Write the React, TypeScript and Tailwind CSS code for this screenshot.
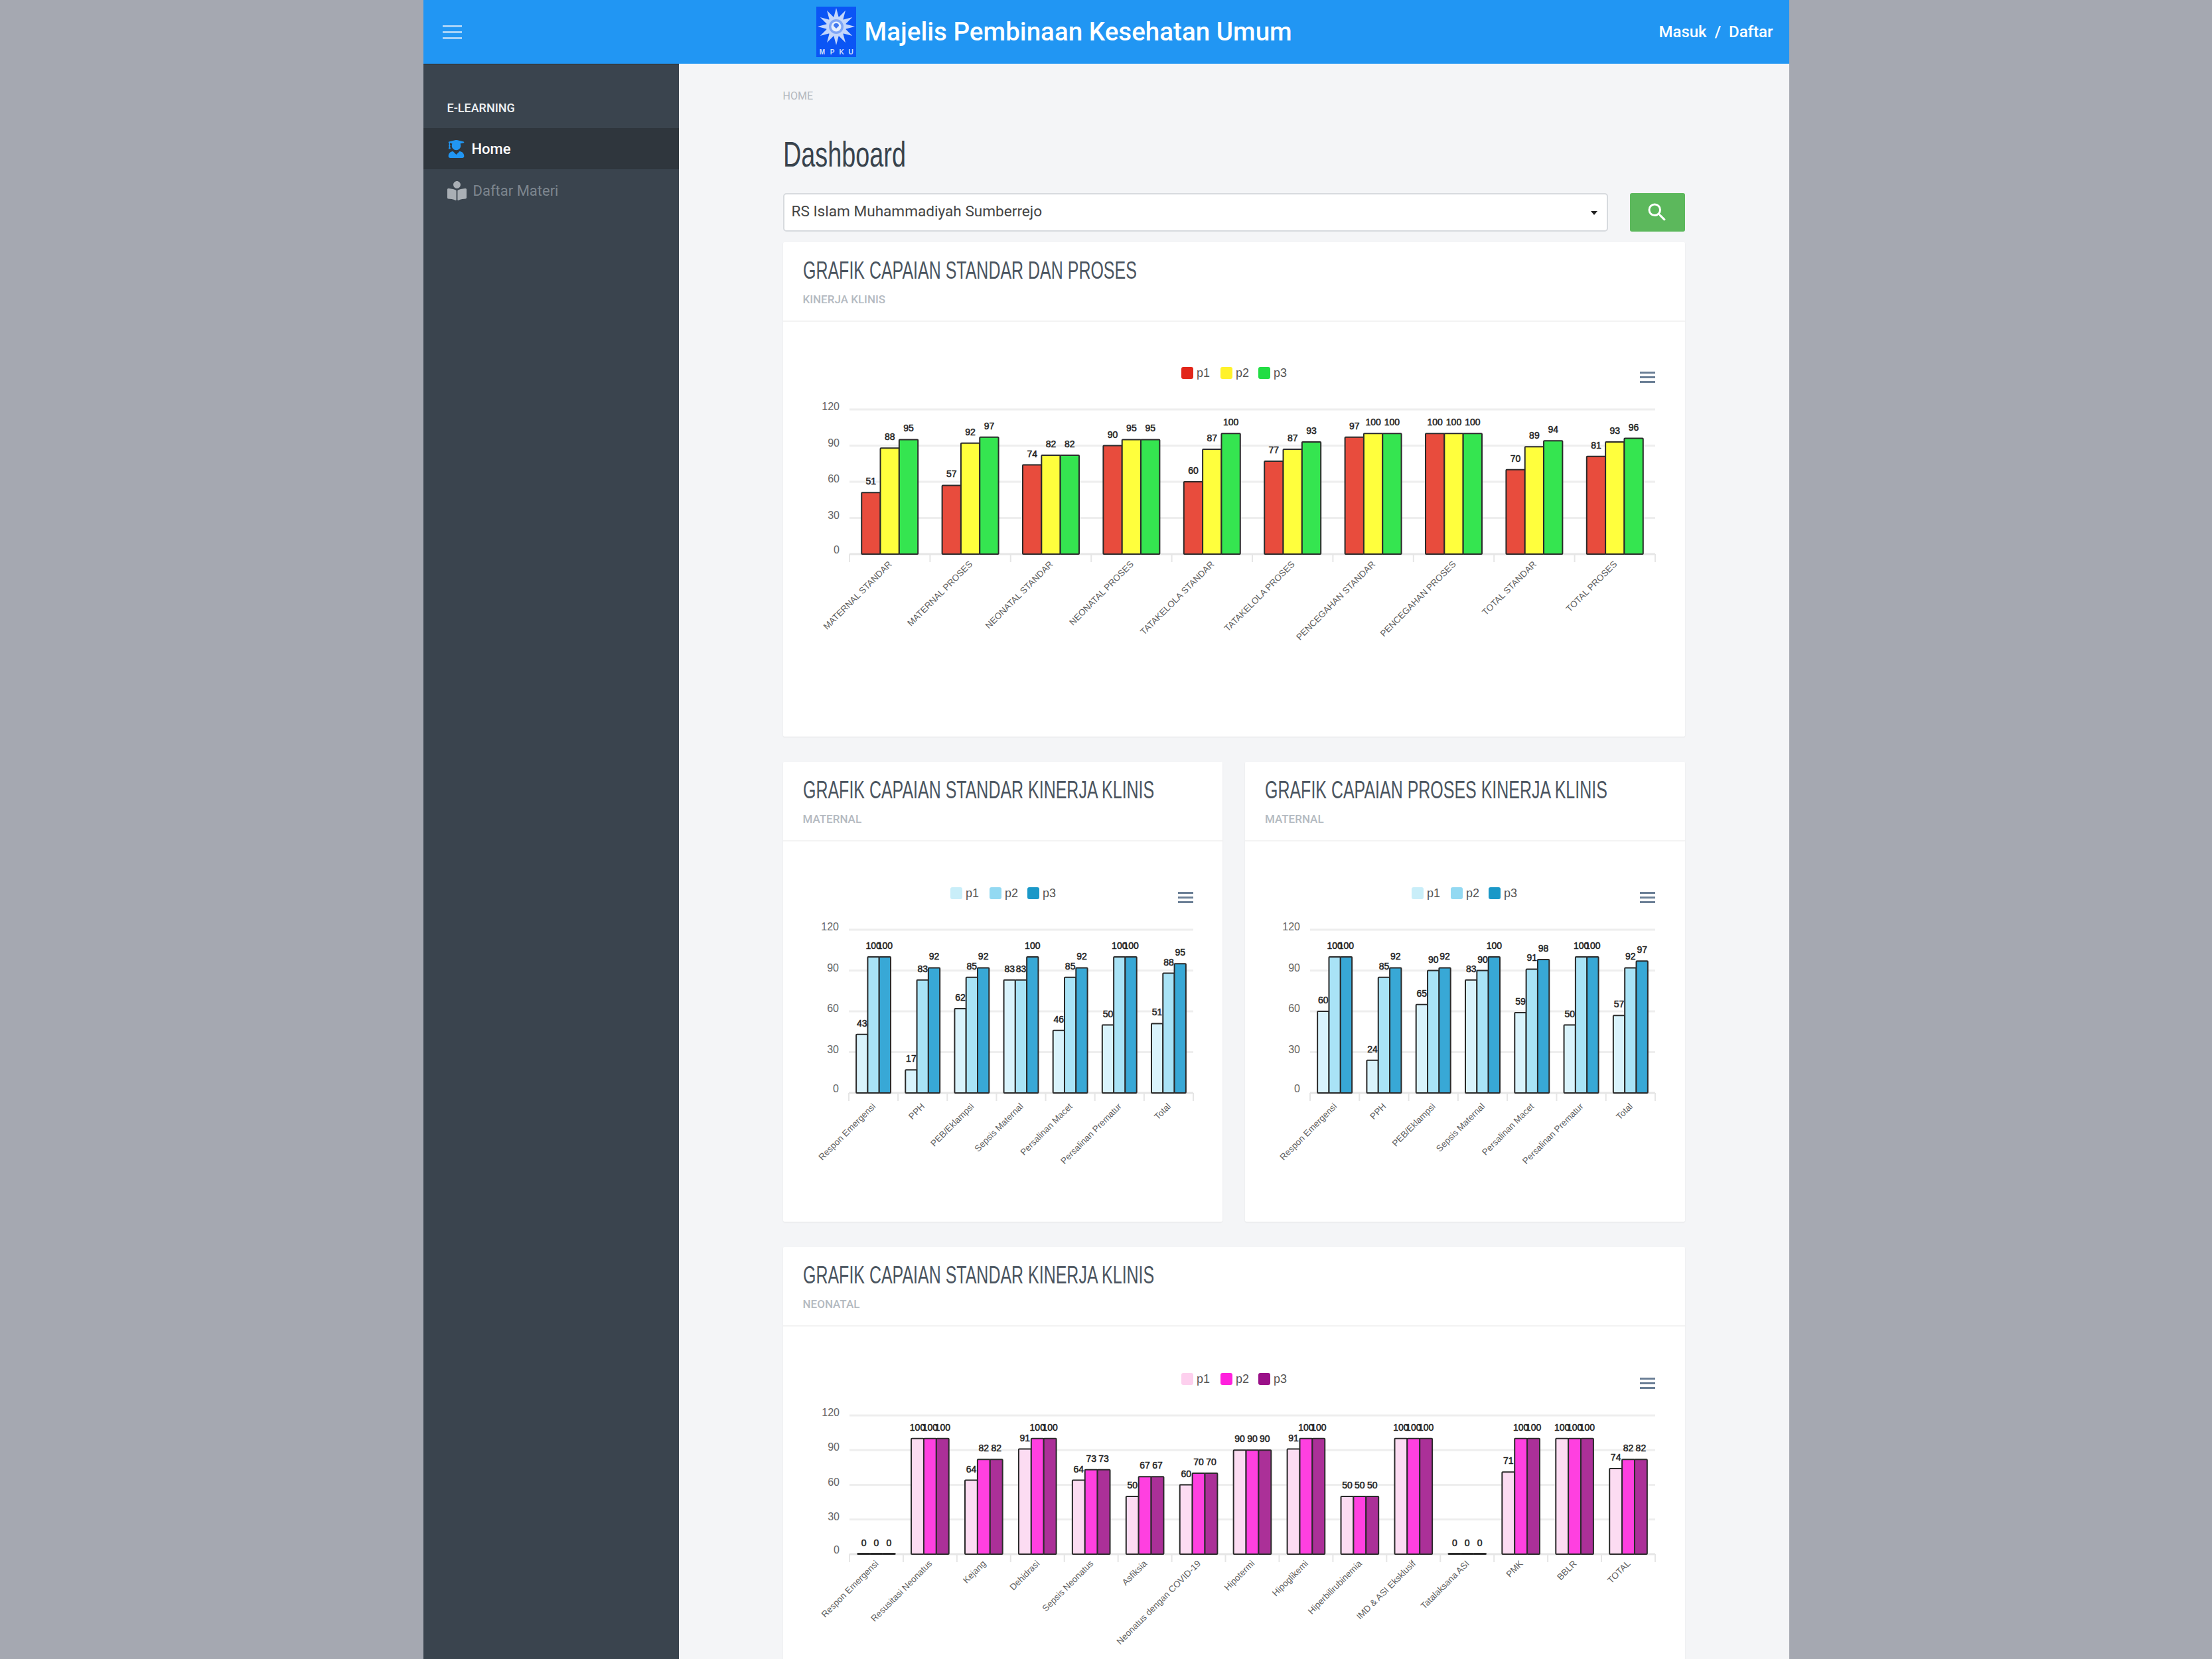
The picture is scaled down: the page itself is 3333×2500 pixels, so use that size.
import React from "react";
import { FaUserGraduate, FaBookReader } from "react-icons/fa";
import { MdSearch } from "react-icons/md";

type Row = [string, number, number, number];
type ChartProps = {
  width: number; height: number; left: number; right: number; top: number; bottom: number;
  legendX: number; rows: Row[]; fills: string[]; swatches: string[]; labelSize: number; labelDy: number;
};

const FONT = "'Liberation Sans', Arial, sans-serif";

function Chart({ width, height, left, right, top, bottom, legendX, rows, fills, swatches, labelSize, labelDy }: ChartProps) {
  const cell = (right - left) / rows.length;
  const unit = (bottom - top) / 120;
  const bar = cell * 0.2333;
  const pad = cell * 0.15;
  const legendY = top - 64;
  const offsets = [0, 59, 116];
  return (
    <svg width={width} height={height} viewBox={`0 0 ${width} ${height}`} className="block" fontFamily={FONT}>
      {offsets.map((o, i) => (
        <g key={i}>
          <rect x={legendX + o} y={legendY} width={18} height={18} rx={3} fill={swatches[i]} />
          <text x={legendX + o + 23} y={legendY + 15} fontSize={18} fill="#555">{`p${i + 1}`}</text>
        </g>
      ))}
      <g stroke="#6b7f96" strokeWidth={3}>
        <path d={`M${right - 23} ${top - 55.5}H${right}M${right - 23} ${top - 48.5}H${right}M${right - 23} ${top - 41.5}H${right}`} />
      </g>
      {[120, 90, 60, 30].map((v) => (
        <line key={v} x1={left} x2={right} y1={bottom - v * unit} y2={bottom - v * unit} stroke="#eeeeee" strokeWidth={3} />
      ))}
      {[120, 90, 60, 30, 0].map((v) => (
        <text key={v} x={left - 15} y={bottom - v * unit + (v === 0 ? -1 : 1)} textAnchor="end" fontSize={16} fill="#666">{v}</text>
      ))}
      <line x1={left} x2={right} y1={bottom} y2={bottom} stroke="#e6e6e6" strokeWidth={3} />
      {Array.from({ length: rows.length + 1 }).map((_, i) => (
        <line key={i} x1={left + i * cell} x2={left + i * cell} y1={bottom} y2={bottom + 12} stroke="#e6e6e6" strokeWidth={2} />
      ))}
      {rows.map((r, i) => {
        const x0 = left + i * cell + pad;
        const cx = left + i * cell + cell / 2;
        const lx = cx + 4;
        const ly = bottom + labelDy;
        return (
          <g key={r[0]}>
            {[r[1], r[2], r[3]].map((v, j) => (
              <g key={j}>
                <rect x={x0 + j * bar} y={bottom - Math.max(v * unit, 1)} width={bar} height={Math.max(v * unit, 1)} fill={fills[j]} stroke="#2a2a2a" strokeWidth={2} rx={1} />
                <text x={x0 + j * bar + bar / 2} y={bottom - v * unit - 12} textAnchor="middle" fontSize={14} stroke="#222" strokeWidth={0.5} fill="#222">{v}</text>
              </g>
            ))}
            <text x={lx} y={ly} textAnchor="end" fontSize={labelSize} fill="#5f5f5f" transform={`rotate(-45 ${lx} ${ly})`}>{r[0]}</text>
          </g>
        );
      })}
    </svg>
  );
}

function Card({ title, sub, children }: { title: string; sub: string; children: React.ReactNode }) {
  return (
    <div className="bg-white shadow-[0_1px_2px_rgba(0,0,0,0.08)] rounded-[2px] overflow-hidden">
      <div className="h-[120px] border-b-2 border-[#f3f3f3] pl-[30px] pt-[22px]">
        <div className="h-[42px] leading-[42px] text-[37px] text-[#4b5560] whitespace-nowrap font-['Liberation_Sans_Narrow','Liberation_Sans',sans-serif] origin-left scale-x-[0.675]">{title}</div>
        <div className="mt-[13px] text-[17px] leading-[18px] font-medium text-[#b4bac1] font-[Roboto,sans-serif]">{sub}</div>
      </div>
      {children}
    </div>
  );
}

const R1: Row[] = [
  ["MATERNAL STANDAR", 51, 88, 95], ["MATERNAL PROSES", 57, 92, 97], ["NEONATAL STANDAR", 74, 82, 82],
  ["NEONATAL PROSES", 90, 95, 95], ["TATAKELOLA STANDAR", 60, 87, 100], ["TATAKELOLA PROSES", 77, 87, 93],
  ["PENCEGAHAN STANDAR", 97, 100, 100], ["PENCEGAHAN PROSES", 100, 100, 100], ["TOTAL STANDAR", 70, 89, 94], ["TOTAL PROSES", 81, 93, 96],
];
const R2: Row[] = [
  ["Respon Emergensi", 43, 100, 100], ["PPH", 17, 83, 92], ["PEB/Eklampsi", 62, 85, 92], ["Sepsis Maternal", 83, 83, 100],
  ["Persalinan Macet", 46, 85, 92], ["Persalinan Prematur", 50, 100, 100], ["Total", 51, 88, 95],
];
const R3: Row[] = [
  ["Respon Emergensi", 60, 100, 100], ["PPH", 24, 85, 92], ["PEB/Eklampsi", 65, 90, 92], ["Sepsis Maternal", 83, 90, 100],
  ["Persalinan Macet", 59, 91, 98], ["Persalinan Prematur", 50, 100, 100], ["Total", 57, 92, 97],
];
const R4: Row[] = [
  ["Respon Emergensi", 0, 0, 0], ["Resusitasi Neonatus", 100, 100, 100], ["Kejang", 64, 82, 82], ["Dehidrasi", 91, 100, 100],
  ["Sepsis Neonatus", 64, 73, 73], ["Asfiksia", 50, 67, 67], ["Neonatus dengan COVID-19", 60, 70, 70], ["Hipotermi", 90, 90, 90],
  ["Hipoglikemi", 91, 100, 100], ["Hiperbilirubinemia", 50, 50, 50], ["IMD & ASI Eksklusif", 100, 100, 100], ["Tatalaksana ASI", 0, 0, 0],
  ["PMK", 71, 100, 100], ["BBLR", 100, 100, 100], ["TOTAL", 74, 82, 82],
];
const RED = ["#e84c3d", "#ffff3d", "#35e550"];
const RED_S = ["#e2261a", "#fff22a", "#22dd44"];
const BLUE = ["#d9f3fc", "#a9e3f6", "#38a8d6"];
const BLUE_S = ["#c9eef9", "#93d9f2", "#1a98c8"];
const PINK = ["#fcdcf2", "#ff40e0", "#ab3098"];
const PINK_S = ["#fdd0ee", "#ff20dd", "#9a1088"];

function Logo() {
  const rays = Array.from({ length: 12 }).map((_, i) => i * 30);
  return (
    <svg width={60} height={76} viewBox="0 0 60 76" className="shrink-0" fontFamily="'Liberation Sans', sans-serif">
      <rect width={60} height={76} fill="#0b55f5" />
      <g transform="translate(30 30)">
        {rays.map((a) => (
          <polygon key={a} points="-4,-13 0,-28 4,-13" fill="#c3d6fb" transform={`rotate(${a})`} />
        ))}
        <circle r={15} fill="#c3d6fb" />
        <circle r={11} fill="#7fa6f6" />
        <circle r={7.5} fill="#e6effd" />
        <path d="M-4 -1a4 4 0 0 1 8 0l-4 4z" fill="#3f76ee" />
      </g>
      <g fill="#cfe0fb" fontSize={10} fontWeight={700} textAnchor="middle">
        <text x={9} y={72}>M</text>
        <text x={24} y={72}>P</text>
        <text x={38} y={72}>K</text>
        <text x={52} y={72}>U</text>
      </g>
    </svg>
  );
}

export default function App() {
  return (
    <div className="h-[2500px] w-[3333px] overflow-hidden bg-[#a5a8b1] font-[Roboto,sans-serif]">
      <div className="mx-auto flex h-[2500px] w-[2058px] flex-col">
        <header className="flex h-[96px] shrink-0 items-center bg-[#2196f3] text-white">
          <div className="flex w-[592px] shrink-0 pl-[29px]">
            <div className="flex w-[29px] flex-col gap-[6px]">
              <span className="h-[3px] bg-[#a9d4f8]" />
              <span className="h-[3px] bg-[#a9d4f8]" />
              <span className="h-[3px] bg-[#a9d4f8]" />
            </div>
          </div>
          <Logo />
          <div className="ml-[13px] text-[38.6px] font-medium leading-none whitespace-nowrap">Majelis Pembinaan Kesehatan Umum</div>
          <div className="ml-auto flex gap-[12px] pr-[24px] text-[24px] font-medium">
            <span>Masuk</span><span>/</span><span>Daftar</span>
          </div>
        </header>
        <div className="flex min-h-0 flex-1">
          <aside className="w-[385px] shrink-0 border-t-2 border-[#363c42] bg-[#3a444e] text-white">
            <div className="flex h-[95px] items-end pb-[21px] pl-[36px] text-[18px] font-medium leading-[18px] text-[#eef0f2]">E-LEARNING</div>
            <div className="flex h-[62px] items-center gap-[10px] bg-[#2f363d] pl-[36px] text-[22px] font-medium">
              <FaUserGraduate className="text-[27px] text-[#2196f3]" />
              <span>Home</span>
            </div>
            <div className="flex h-[64px] items-center gap-[10px] pl-[36px] text-[22px] text-[#7d868e]">
              <FaBookReader className="text-[29px] text-[#a9afb5]" />
              <span>Daftar Materi</span>
            </div>
          </aside>
          <main className="min-w-0 flex-1 overflow-hidden bg-[#f4f5f7] px-[157px]">
            <div className="mt-[40px] text-[16px] leading-[18px] text-[#b3b8be]">HOME</div>
            <h1 className="mt-[49px] h-[58px] text-[54px] leading-[58px] text-[#39434d] whitespace-nowrap font-['Liberation_Sans_Narrow','Liberation_Sans',sans-serif] origin-left scale-x-[0.7]">Dashboard</h1>
            <div className="mt-[30px] flex h-[58px] gap-[33px]">
              <div className="flex flex-1 items-center justify-between rounded-[5px] border-2 border-[#d7dade] bg-white pb-[3px] pl-[11px] pr-[14px] text-[22.6px] text-[#444]">
                <span>RS Islam Muhammadiyah Sumberrejo</span>
                <span className="mt-[5px] border-x-[5px] border-t-[6px] border-x-transparent border-t-[#222]" />
              </div>
              <button className="flex w-[83px] items-center justify-center rounded-[3px] bg-[#5cb85c] text-[36px] text-white"><MdSearch /></button>
            </div>
            <div className="mt-[16px] flex flex-col gap-[38px]">
              <Card title="GRAFIK CAPAIAN STANDAR DAN PROSES" sub="KINERJA KLINIS">
                <Chart width={1360} height={625} left={100} right={1314} top={132} bottom={350} legendX={600} rows={R1} fills={RED} swatches={RED_S} labelSize={13.5} labelDy={16} />
              </Card>
              <div className="grid grid-cols-2 gap-[34px]">
                <Card title="GRAFIK CAPAIAN STANDAR KINERJA KLINIS" sub="MATERNAL">
                  <Chart width={663} height={573} left={99} right={618} top={133} bottom={379} legendX={252} rows={R2} fills={BLUE} swatches={BLUE_S} labelSize={13.5} labelDy={21} />
                </Card>
                <Card title="GRAFIK CAPAIAN PROSES KINERJA KLINIS" sub="MATERNAL">
                  <Chart width={663} height={573} left={98} right={618} top={133} bottom={379} legendX={251} rows={R3} fills={BLUE} swatches={BLUE_S} labelSize={13.5} labelDy={21} />
                </Card>
              </div>
              <Card title="GRAFIK CAPAIAN STANDAR KINERJA KLINIS" sub="NEONATAL">
                <Chart width={1360} height={625} left={100} right={1314} top={134} bottom={343} legendX={600} rows={R4} fills={PINK} swatches={PINK_S} labelSize={13.5} labelDy={15} />
              </Card>
            </div>
          </main>
        </div>
      </div>
    </div>
  );
}
